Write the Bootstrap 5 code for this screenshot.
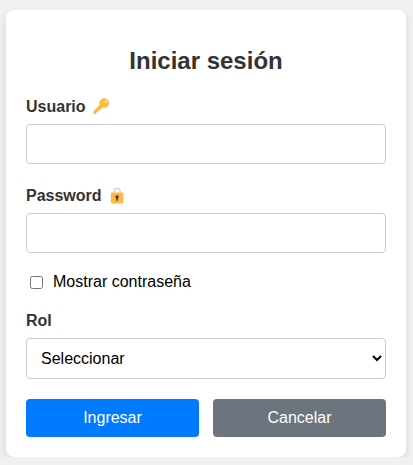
<!DOCTYPE html>
<html lang="es">
<head>
<meta charset="utf-8">
<meta name="viewport" content="width=device-width, initial-scale=1">
<title>Iniciar sesión</title>
<link href="https://cdn.jsdelivr.net/npm/bootstrap@5.3.0/dist/css/bootstrap.min.css" rel="stylesheet">
<style>
body { background: #f0f0f0; font-family: "Liberation Sans", Arial, sans-serif; color: #000; line-height: 18px; overflow: hidden; }
.login-box { width: 400px; height: 447px; margin: 10px 0 0 6px; padding: 37px 20px 20px; border-radius: 8px; box-shadow: 0 4px 8px rgba(0,0,0,.1); }
.login-title { font-size: 24px; line-height: 28px; color: #333; margin-bottom: 23px; }
.login-box .form-label { color: #333; line-height: 18px; margin-bottom: 8px; gap: 7px; }
.login-box .form-control { height: 40px; border: 1px solid #ccc; border-radius: 4px; margin-bottom: 23px; }
.login-box .last-field { margin-bottom: 20px; }
.show-pass { height: 18px; margin-bottom: 21px; }
.show-pass input { width: 13px; height: 13px; margin: 3px 10px 0 4px; }
.role-select { height: 41px; padding: 0 10px; border: 1px solid #ccc; border-radius: 4px; background: #fff; color: #000; margin-bottom: 20px; }
.actions { gap: 14px; }
.actions .btn { height: 38px; padding: 0; border: 0; border-radius: 4px; line-height: 38px; color: #fff; }
.btn-enter { background: #007bff; }
.btn-cancel { background: #6c757d; }
</style>
</head>
<body>
<main class="login-box bg-white">
  <h2 class="login-title text-center fw-bold">Iniciar sesión</h2>
  <form>
    <label class="form-label d-flex align-items-center fw-bold" for="user">Usuario
      <svg width="17" height="18" viewBox="0 0 17 18" aria-hidden="true">
        <path d="M7 6.6.8 12.8Q.2 13.5.2 14.6q0 1.3 1.3 1.3h1.2l.8-1.6 1.4-.3.4-1.4 1.5-.4 2.8-2.9z" fill="#fdb944"/>
        <circle cx="11.1" cy="5.1" r="4.9" fill="#fdb944"/>
        <circle cx="12.8" cy="3.5" r="1.1" fill="#fff"/>
      </svg>
    </label>
    <input class="form-control" type="text" id="user">
    <label class="form-label d-flex align-items-center fw-bold" for="pass">Password
      <svg width="17" height="18" viewBox="0 0 17 18" aria-hidden="true">
        <path d="M5 6.5V4.5a3.1 3.1 0 0 1 6.2 0v2" fill="none" stroke="#ccc" stroke-width="1.2"/>
        <rect x="1.9" y="5.4" width="12.4" height="11" rx="1.1" fill="#fdb944"/>
        <path d="M8.1 8.3a1.7 1.7 0 0 0-.8 3.2v2.3h1.6v-2.3a1.7 1.7 0 0 0-.8-3.2z" fill="#433b4e"/>
      </svg>
    </label>
    <input class="form-control last-field" type="password" id="pass">
    <div class="show-pass d-flex align-items-start">
      <input type="checkbox" id="show"><label for="show">Mostrar contraseña</label>
    </div>
    <label class="form-label d-flex fw-bold" for="role">Rol</label>
    <select class="role-select w-100 d-block" id="role"><option>Seleccionar</option></select>
    <div class="actions d-flex">
      <button type="button" class="btn btn-enter flex-fill w-50">Ingresar</button>
      <button type="button" class="btn btn-cancel flex-fill w-50">Cancelar</button>
    </div>
  </form>
</main>
<script src="https://cdn.jsdelivr.net/npm/bootstrap@5.3.0/dist/js/bootstrap.bundle.min.js"></script>
</body>
</html>
